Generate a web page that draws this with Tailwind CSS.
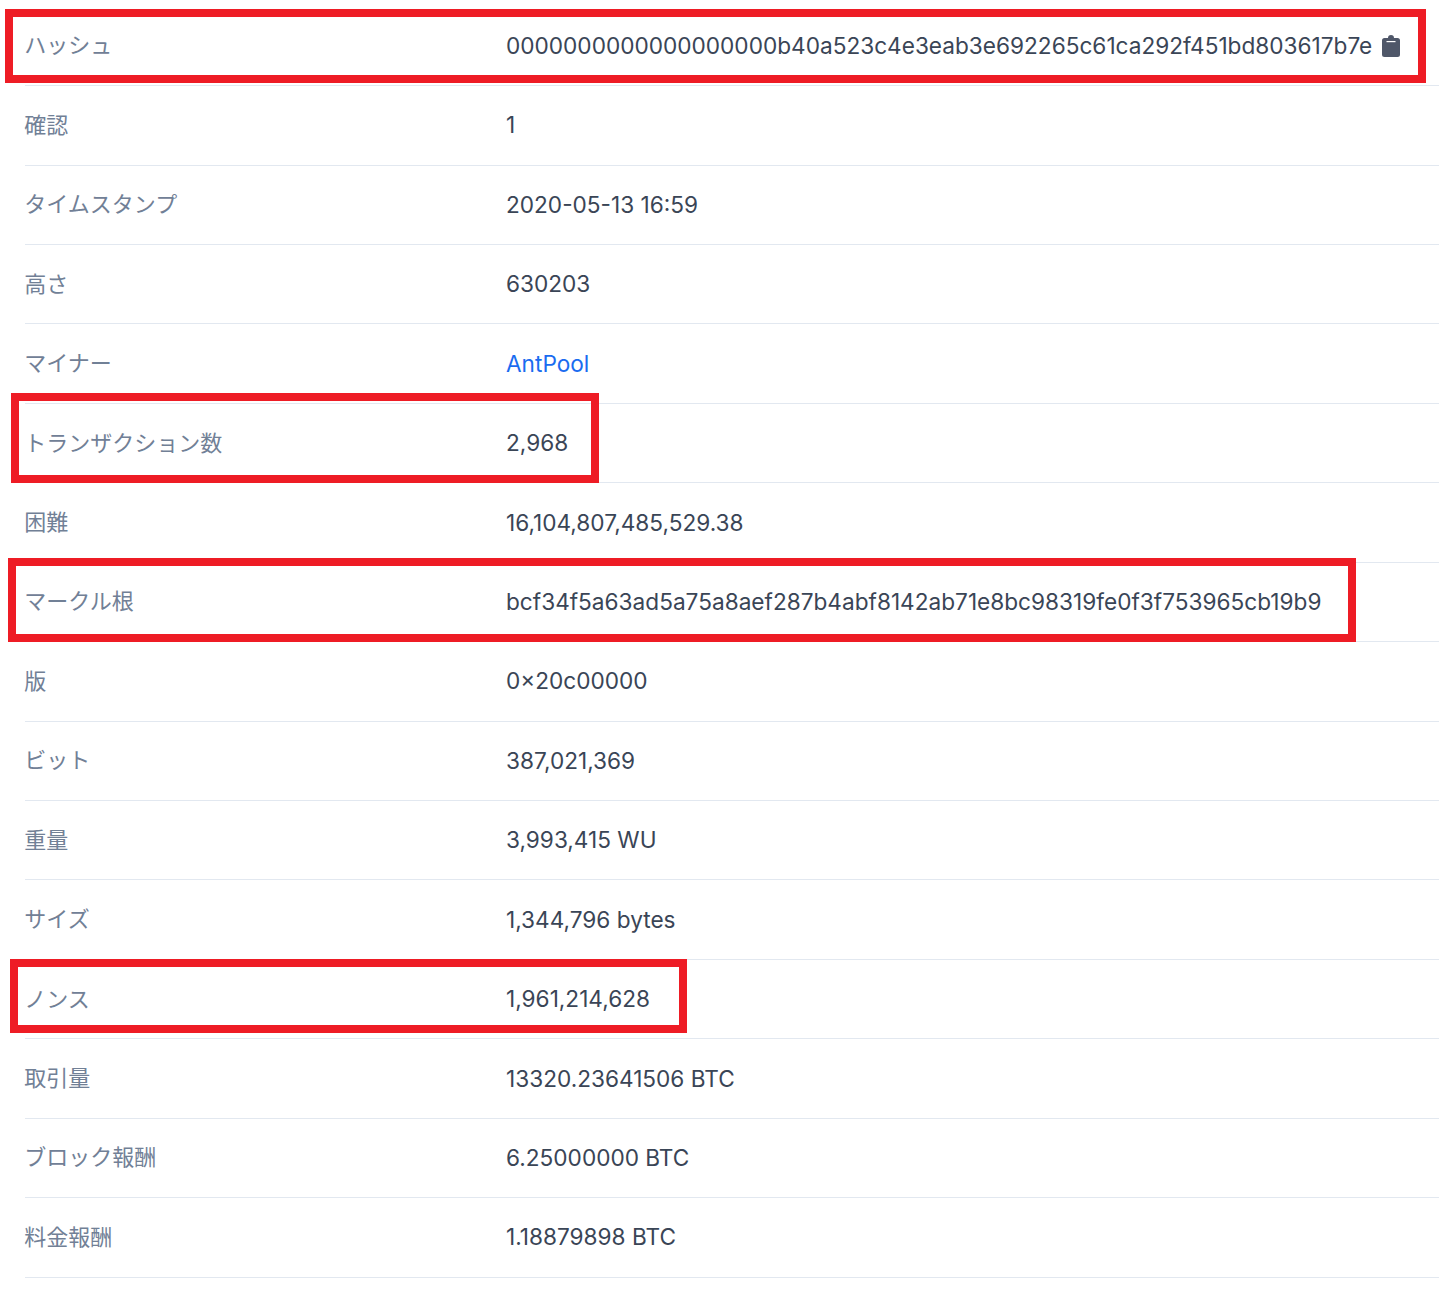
<!DOCTYPE html>
<html lang="ja">
  <head>
    <meta charset="UTF-8" />
    <title>ブロック詳細</title>
    <script src="https://cdn.jsdelivr.net/npm/@tailwindcss/browser@4"></script>
  </head>
  <body class="bg-white relative h-[1290px] overflow-hidden font-['Inter','Noto_Sans_CJK_JP',sans-serif] text-[22.63px] text-[#3a4556]">
    <dl class="ml-[25px] pt-[6.65px]">
      <div class="flex items-center h-[79.44px] border-b border-[#e2e8f0]">
        <dt class="-ml-[0.7px] w-[481.7px] text-[22px] text-[#718096]">ハッシュ</dt>
        <dd class="flex items-center gap-[10px]">
          0000000000000000000b40a523c4e3eab3e692265c61ca292f451bd803617b7e
          <svg class="w-[18px] h-[22px] text-[#4f5769]" viewBox="0 0 18 22" fill="currentColor">
            <path d="M6 3a3 3 0 0 1 6 0h3.500A2.500 2.500 0 0 1 18 5.500v14a2.500 2.500 0 0 1-2.500 2.500h-13A2.500 2.500 0 0 1 0 19.500v-14A2.500 2.500 0 0 1 2.500 3z" />
            <rect x="4.500" y="6" width="9" height="1.200" fill="#fff" />
          </svg>
        </dd>
      </div>
      <div class="flex items-center h-[79.44px] border-b border-[#e2e8f0]">
        <dt class="-ml-[0.7px] w-[481.7px] text-[22px] text-[#718096]">確認</dt>
        <dd>1</dd>
      </div>
      <div class="flex items-center h-[79.44px] border-b border-[#e2e8f0]">
        <dt class="-ml-[0.7px] w-[481.7px] text-[22px] text-[#718096]">タイムスタンプ</dt>
        <dd>2020-05-13 16:59</dd>
      </div>
      <div class="flex items-center h-[79.44px] border-b border-[#e2e8f0]">
        <dt class="-ml-[0.7px] w-[481.7px] text-[22px] text-[#718096]">高さ</dt>
        <dd>630203</dd>
      </div>
      <div class="flex items-center h-[79.44px] border-b border-[#e2e8f0]">
        <dt class="-ml-[0.7px] w-[481.7px] text-[22px] text-[#718096]">マイナー</dt>
        <dd><a href="#" class="text-[#1a6cf0]">AntPool</a></dd>
      </div>
      <div class="flex items-center h-[79.44px] border-b border-[#e2e8f0]">
        <dt class="-ml-[0.7px] w-[481.7px] text-[22px] text-[#718096]">トランザクション数</dt>
        <dd>2,968</dd>
      </div>
      <div class="flex items-center h-[79.44px] border-b border-[#e2e8f0]">
        <dt class="-ml-[0.7px] w-[481.7px] text-[22px] text-[#718096]">困難</dt>
        <dd>16,104,807,485,529.38</dd>
      </div>
      <div class="flex items-center h-[79.44px] border-b border-[#e2e8f0]">
        <dt class="-ml-[0.7px] w-[481.7px] text-[22px] text-[#718096]">マークル根</dt>
        <dd>bcf34f5a63ad5a75a8aef287b4abf8142ab71e8bc98319fe0f3f753965cb19b9</dd>
      </div>
      <div class="flex items-center h-[79.44px] border-b border-[#e2e8f0]">
        <dt class="-ml-[0.7px] w-[481.7px] text-[22px] text-[#718096]">版</dt>
        <dd>0×20c00000</dd>
      </div>
      <div class="flex items-center h-[79.44px] border-b border-[#e2e8f0]">
        <dt class="-ml-[0.7px] w-[481.7px] text-[22px] text-[#718096]">ビット</dt>
        <dd>387,021,369</dd>
      </div>
      <div class="flex items-center h-[79.44px] border-b border-[#e2e8f0]">
        <dt class="-ml-[0.7px] w-[481.7px] text-[22px] text-[#718096]">重量</dt>
        <dd>3,993,415 WU</dd>
      </div>
      <div class="flex items-center h-[79.44px] border-b border-[#e2e8f0]">
        <dt class="-ml-[0.7px] w-[481.7px] text-[22px] text-[#718096]">サイズ</dt>
        <dd>1,344,796 bytes</dd>
      </div>
      <div class="flex items-center h-[79.44px] border-b border-[#e2e8f0]">
        <dt class="-ml-[0.7px] w-[481.7px] text-[22px] text-[#718096]">ノンス</dt>
        <dd>1,961,214,628</dd>
      </div>
      <div class="flex items-center h-[79.44px] border-b border-[#e2e8f0]">
        <dt class="-ml-[0.7px] w-[481.7px] text-[22px] text-[#718096]">取引量</dt>
        <dd>13320.23641506 BTC</dd>
      </div>
      <div class="flex items-center h-[79.44px] border-b border-[#e2e8f0]">
        <dt class="-ml-[0.7px] w-[481.7px] text-[22px] text-[#718096]">ブロック報酬</dt>
        <dd>6.25000000 BTC</dd>
      </div>
      <div class="flex items-center h-[79.44px] border-b border-[#e2e8f0]">
        <dt class="-ml-[0.7px] w-[481.7px] text-[22px] text-[#718096]">料金報酬</dt>
        <dd>1.18879898 BTC</dd>
      </div>
    </dl>

    <!-- red annotation boxes over the table -->
    <div class="absolute left-[5px] top-[9px] w-[1421px] h-[74px] border-[8px] border-[#ee1c25]"></div>
    <div class="absolute left-[11px] top-[393px] w-[588px] h-[90px] border-[8px] border-[#ee1c25]"></div>
    <div class="absolute left-[8px] top-[558px] w-[1348px] h-[84px] border-[8px] border-[#ee1c25]"></div>
    <div class="absolute left-[10px] top-[959px] w-[677px] h-[74px] border-[8px] border-[#ee1c25]"></div>
  </body>
</html>
